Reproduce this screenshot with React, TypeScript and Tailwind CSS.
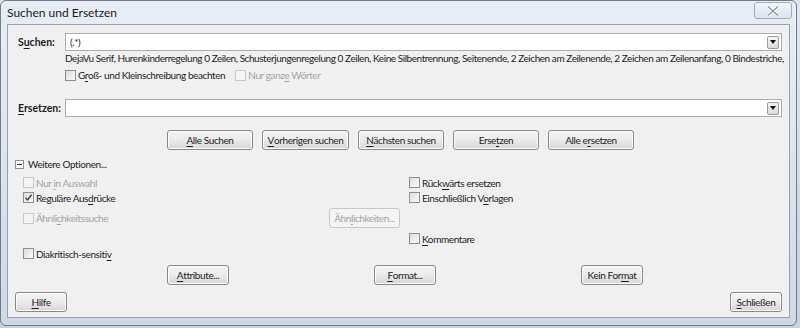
import { ReactNode } from "react";

// Windows 7 style "Suchen und Ersetzen" dialog

function Mn({ text, at }: { text: string; at: number }) {
    if (at < 0) return <>{text}</>;
    return (
        <>
            {text.slice(0, at)}
            <span className="underline underline-offset-[1.5px]">{text[at]}</span>
            {text.slice(at + 1)}
        </>
    );
}

function CheckBox({ checked = false, disabled = false }: { checked?: boolean; disabled?: boolean }) {
    return (
        <span
            className={`inline-flex w-[11px] h-[11px] shrink-0 items-center justify-center border ${disabled
                ? "border-[#c9c9c9] bg-[#f4f4f4]"
                : "border-[#8f8f8f] bg-gradient-to-br from-[#dcdcdc] to-[#fbfbfb]"
                }`}
        >
            {checked && (
                <svg width="9" height="9" viewBox="0 0 9 9">
                    <path d="M1.5 4.8 L3.6 7 L7.6 1.6" fill="none" stroke="#3b3b3b" strokeWidth="1.4" />
                </svg>
            )}
        </span>
    );
}

function Check({ label, at, checked, disabled }: { label: string; at: number; checked?: boolean; disabled?: boolean }) {
    return (
        <div className={`flex items-center gap-[2px] whitespace-nowrap ${disabled ? "text-[#a3a3a3]" : "text-[#1e1e1e]"}`}>
            <CheckBox checked={checked} disabled={disabled} />
            <span><Mn text={label} at={at} /></span>
        </div>
    );
}

function Button({ children, w, disabled = false }: { children: ReactNode; w: string; disabled?: boolean }) {
    return (
        <div
            className={`${w} h-[20px] shrink-0 whitespace-nowrap flex items-center justify-center rounded-[3px] border ${disabled
                ? "border-[#c8c8c8] bg-[#f4f4f4] text-[#a3a3a3]"
                : "border-[#8a8a8a] bg-gradient-to-b from-[#f4f4f4] via-[#ebebeb] to-[#d6d6d6] text-[#1e1e1e] shadow-[inset_0_0_0_1px_#fbfbfb]"
                }`}
        >
            {children}
        </div>
    );
}

function Combo({ value }: { value?: string }) {
    return (
        <div className="flex-1 h-[18px] bg-white border border-[#abadb3] flex items-center justify-between pl-[4px] pr-[2px]">
            <span>{value}</span>
            <div className="w-[12px] h-[13px] border border-[#9a9a9a] rounded-[2px] bg-gradient-to-b from-[#f6f6f6] to-[#dadada] flex items-center justify-center">
                <svg width="6" height="4" viewBox="0 0 6 4"><path d="M0 0 H6 L3 4 Z" fill="#111" /></svg>
            </div>
        </div>
    );
}

export default function App() {
    return (
        <div
            className="w-[800px] h-[328px] overflow-hidden bg-gradient-to-b from-[#dde6ef] via-[#d3dde8] to-[#c8d3df] text-[10px] leading-[14px] tracking-[-0.4px]"
            style={{ fontFamily: 'Lato, "Noto Sans", sans-serif' }}
        >
            <div className="w-[797px] h-[326px] border border-[#6f7c8a] rounded-[6px] bg-gradient-to-b from-[#e8eef5] to-[#cfd9e4] flex flex-col">
                {/* Title bar */}
                <div className="h-[23px] flex items-start justify-between pl-[6px] pr-[4px]">
                    <span className="mt-[5px] text-[12px] tracking-normal text-[#1a1a1a]">Suchen und Ersetzen</span>
                    <div className="w-[38px] h-[17px] mt-[1px] border border-[#a3adb8] rounded-[3px] bg-gradient-to-b from-[#f1f5f9] to-[#dce4ed] flex items-center justify-center">
                        <svg width="12" height="10" viewBox="0 0 12 10">
                            <path d="M1 0.5 L11 9.5 M11 0.5 L1 9.5" stroke="#ffffff" strokeWidth="3" />
                            <path d="M1 0.5 L11 9.5 M11 0.5 L1 9.5" stroke="#8d97a3" strokeWidth="1.4" />
                        </svg>
                    </div>
                </div>

                {/* Client area */}
                <div className="mx-[6px] mb-[7px] flex-1 bg-[#f0f0f0] border border-[#97a3b0] flex flex-col text-[#1e1e1e]">
                    {/* Suchen */}
                    <div className="mt-[8px] flex items-center pl-[10px] pr-[7px]">
                        <span className="w-[47px] font-bold text-[10.5px] tracking-normal"><Mn text="Suchen:" at={1} /></span>
                        <Combo value="(.*)" />
                    </div>
                    <div className="pl-[57px] whitespace-nowrap tracking-[-0.44px]">
                        DejaVu Serif, Hurenkinderregelung 0 Zeilen, Schusterjungenregelung 0 Zeilen, Keine Silbentrennung, Seitenende, 2 Zeichen am Zeilenende, 2 Zeichen am Zeilenanfang, 0 Bindestriche,
                    </div>
                    <div className="mt-[3px] pl-[57px] flex items-center gap-[10px]">
                        <Check label="Groß- und Kleinschreibung beachten" at={1} />
                        <Check label="Nur ganze Wörter" at={8} disabled />
                    </div>

                    {/* Ersetzen */}
                    <div className="mt-[17px] flex items-center pl-[10px] pr-[7px]">
                        <span className="w-[47px] font-bold text-[10.5px] tracking-normal"><Mn text="Ersetzen:" at={0} /></span>
                        <Combo />
                    </div>

                    {/* Action buttons */}
                    <div className="mt-[13px] pl-[159px] flex gap-[9px]">
                        <Button w="w-[86px]"><Mn text="Alle Suchen" at={0} /></Button>
                        <Button w="w-[87px]"><Mn text="Vorherigen suchen" at={0} /></Button>
                        <Button w="w-[86px]"><Mn text="Nächsten suchen" at={0} /></Button>
                        <Button w="w-[86px]"><Mn text="Ersetzen" at={4} /></Button>
                        <Button w="w-[86px]"><Mn text="Alle ersetzen" at={6} /></Button>
                    </div>

                    {/* Weitere Optionen */}
                    <div className="mt-[7px] pl-[7px] flex items-center gap-[4px]">
                        <span className="w-[9px] h-[9px] border border-[#8f8f8f] bg-white flex items-center justify-center">
                            <span className="w-[5px] h-[1px] bg-[#333]" />
                        </span>
                        <span>Weitere Optionen...</span>
                    </div>

                    <div className="mt-[4px] pl-[15px] flex flex-col">
                        <div className="h-[15px] flex items-center">
                            <div className="w-[386px]"><Check label="Nur in Auswahl" at={4} disabled /></div>
                            <Check label="Rückwärts ersetzen" at={4} />
                        </div>
                        <div className="h-[15px] flex items-center">
                            <div className="w-[386px]"><Check label="Reguläre Ausdrücke" at={12} checked /></div>
                            <Check label="Einschließlich Vorlagen" at={16} />
                        </div>
                        <div className="mt-[3px] h-[20px] flex items-center">
                            <div className="w-[306px]"><Check label="Ähnlichkeitssuche" at={5} disabled /></div>
                            <Button w="w-[71px]" disabled><Mn text="Ähnlichkeiten..." at={3} /></Button>
                        </div>
                        <div className="mt-[3px] h-[15px] flex items-center">
                            <div className="w-[386px]" />
                            <Check label="Kommentare" at={0} />
                        </div>
                        <div className="h-[15px] flex items-center">
                            <Check label="Diakritisch-sensitiv" at={19} />
                        </div>
                    </div>

                    {/* Attribute / Format */}
                    <div className="mt-[4px] pl-[159px] flex">
                        <Button w="w-[62px]"><Mn text="Attribute..." at={0} /></Button>
                        <div className="w-[145px]" />
                        <Button w="w-[62px]"><Mn text="Format..." at={0} /></Button>
                        <div className="w-[145px]" />
                        <Button w="w-[62px]"><Mn text="Kein Format" at={8} /></Button>
                    </div>

                    {/* Bottom */}
                    <div className="mt-[7px] px-[7px] flex justify-between">
                        <Button w="w-[52px]"><Mn text="Hilfe" at={0} /></Button>
                        <Button w="w-[52px]"><Mn text="Schließen" at={0} /></Button>
                    </div>
                </div>
            </div>
        </div>
    );
}
